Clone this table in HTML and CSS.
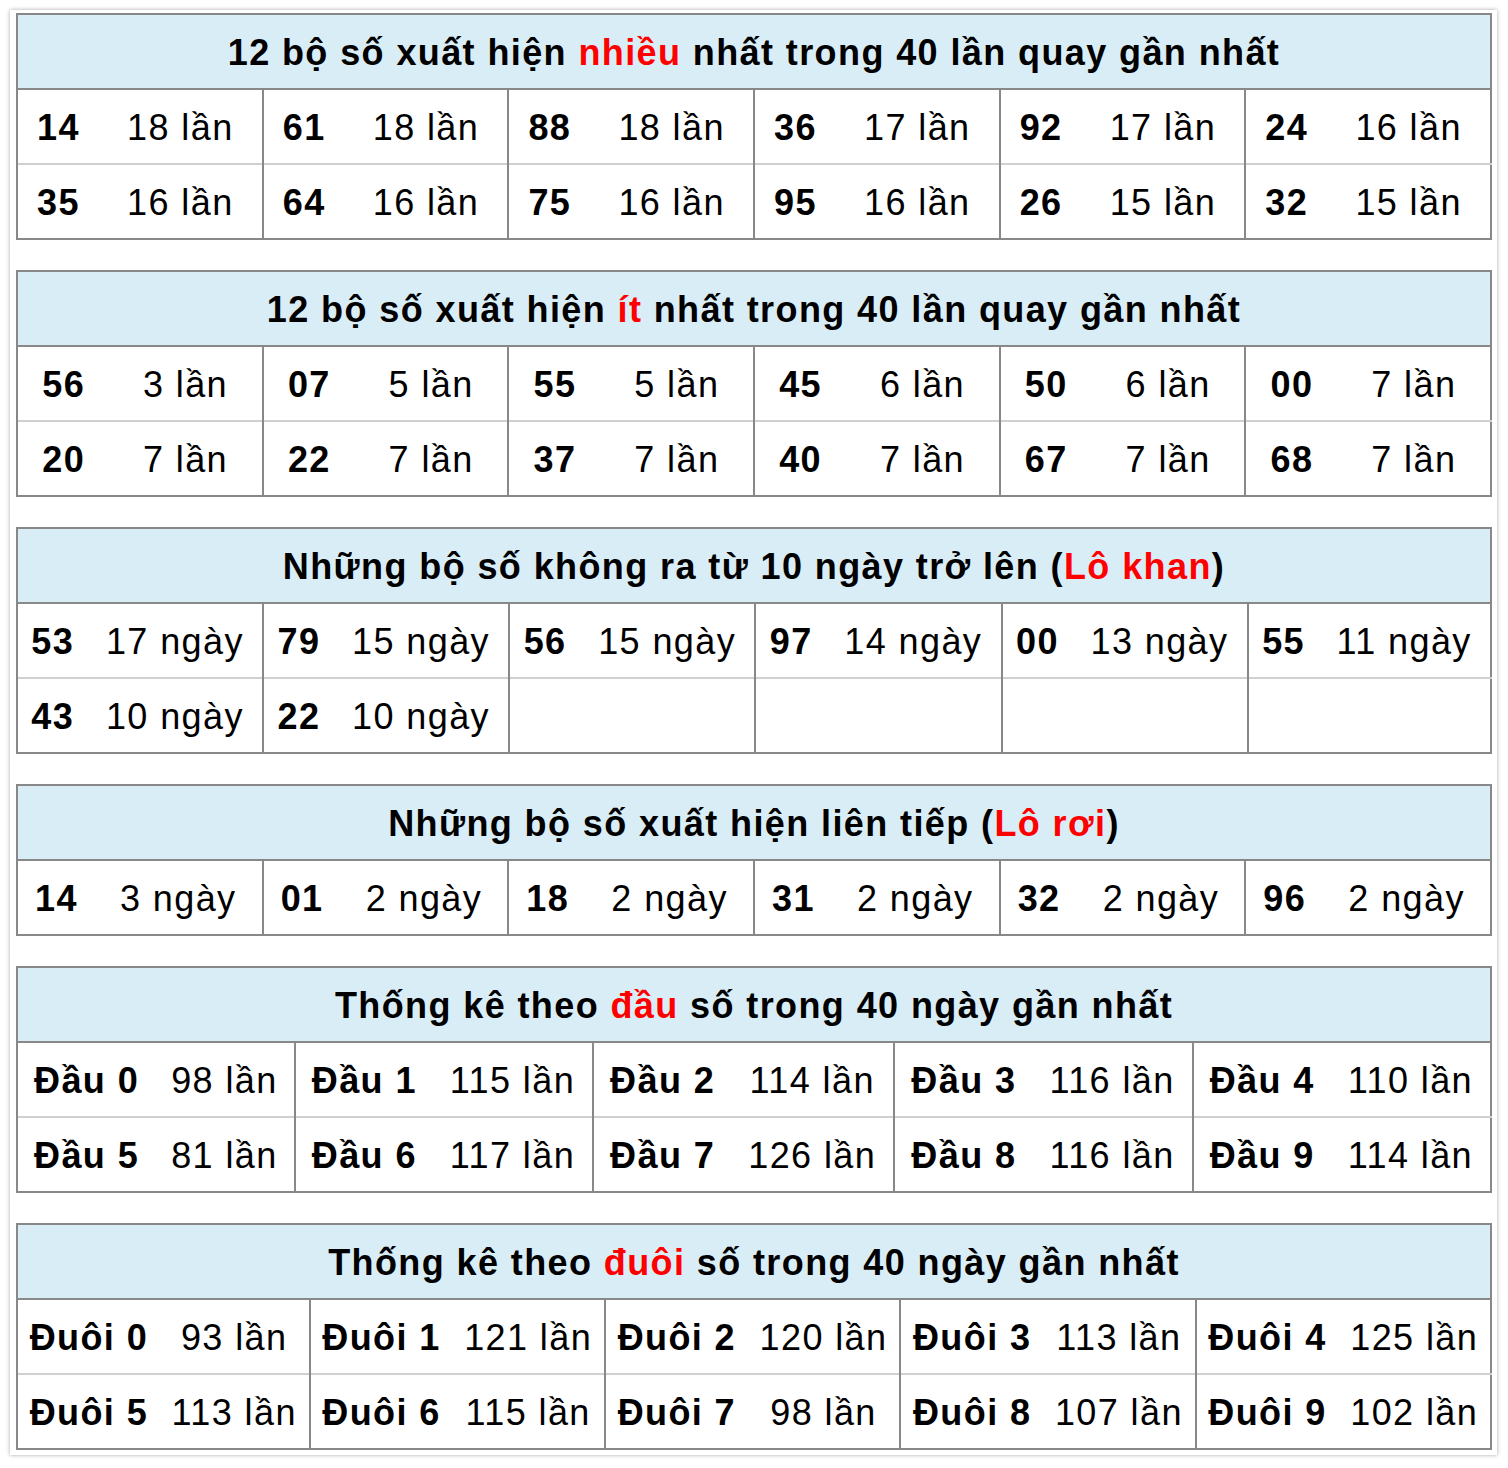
FILE: index.html
```html
<!DOCTYPE html>
<html lang="vi">
<head>
<meta charset="utf-8">
<title>Thống kê lô tô</title>
<link rel="stylesheet" href="styles.css">
</head>
<body>
<div class="wrap">

<table class="stat">
<tr><th colspan="12">12 bộ số xuất hiện <span class="hl">nhiều</span> nhất trong 40 lần quay gần nhất</th></tr>
<tr>
<td class="g n">14</td><td>18 lần</td>
<td class="g n">61</td><td>18 lần</td>
<td class="g n">88</td><td>18 lần</td>
<td class="g n">36</td><td>17 lần</td>
<td class="g n">92</td><td>17 lần</td>
<td class="g n">24</td><td>16 lần</td>
</tr>
<tr>
<td class="g n">35</td><td>16 lần</td>
<td class="g n">64</td><td>16 lần</td>
<td class="g n">75</td><td>16 lần</td>
<td class="g n">95</td><td>16 lần</td>
<td class="g n">26</td><td>15 lần</td>
<td class="g n">32</td><td>15 lần</td>
</tr>
</table>

<table class="stat">
<tr><th colspan="12">12 bộ số xuất hiện <span class="hl">ít</span> nhất trong 40 lần quay gần nhất</th></tr>
<tr>
<td class="g n">56</td><td>3 lần</td>
<td class="g n">07</td><td>5 lần</td>
<td class="g n">55</td><td>5 lần</td>
<td class="g n">45</td><td>6 lần</td>
<td class="g n">50</td><td>6 lần</td>
<td class="g n">00</td><td>7 lần</td>
</tr>
<tr>
<td class="g n">20</td><td>7 lần</td>
<td class="g n">22</td><td>7 lần</td>
<td class="g n">37</td><td>7 lần</td>
<td class="g n">40</td><td>7 lần</td>
<td class="g n">67</td><td>7 lần</td>
<td class="g n">68</td><td>7 lần</td>
</tr>
</table>

<table class="stat">
<tr><th colspan="12">Những bộ số không ra từ 10 ngày trở lên (<span class="hl">Lô khan</span>)</th></tr>
<tr>
<td class="g n">53</td><td>17 ngày</td>
<td class="g n">79</td><td>15 ngày</td>
<td class="g n">56</td><td>15 ngày</td>
<td class="g n">97</td><td>14 ngày</td>
<td class="g n">00</td><td>13 ngày</td>
<td class="g n">55</td><td>11 ngày</td>
</tr>
<tr>
<td class="g n">43</td><td>10 ngày</td>
<td class="g n">22</td><td>10 ngày</td>
<td class="g n"></td><td></td>
<td class="g n"></td><td></td>
<td class="g n"></td><td></td>
<td class="g n"></td><td></td>
</tr>
</table>

<table class="stat">
<tr><th colspan="12">Những bộ số xuất hiện liên tiếp (<span class="hl">Lô rơi</span>)</th></tr>
<tr>
<td class="g n">14</td><td>3 ngày</td>
<td class="g n">01</td><td>2 ngày</td>
<td class="g n">18</td><td>2 ngày</td>
<td class="g n">31</td><td>2 ngày</td>
<td class="g n">32</td><td>2 ngày</td>
<td class="g n">96</td><td>2 ngày</td>
</tr>
</table>

<table class="stat">
<tr><th colspan="10">Thống kê theo <span class="hl">đầu</span> số trong 40 ngày gần nhất</th></tr>
<tr>
<td class="g n">Đầu 0</td><td>98 lần</td>
<td class="g n">Đầu 1</td><td>115 lần</td>
<td class="g n">Đầu 2</td><td>114 lần</td>
<td class="g n">Đầu 3</td><td>116 lần</td>
<td class="g n">Đầu 4</td><td>110 lần</td>
</tr>
<tr>
<td class="g n">Đầu 5</td><td>81 lần</td>
<td class="g n">Đầu 6</td><td>117 lần</td>
<td class="g n">Đầu 7</td><td>126 lần</td>
<td class="g n">Đầu 8</td><td>116 lần</td>
<td class="g n">Đầu 9</td><td>114 lần</td>
</tr>
</table>

<table class="stat">
<tr><th colspan="10">Thống kê theo <span class="hl">đuôi</span> số trong 40 ngày gần nhất</th></tr>
<tr>
<td class="g n">Đuôi 0</td><td>93 lần</td>
<td class="g n">Đuôi 1</td><td>121 lần</td>
<td class="g n">Đuôi 2</td><td>120 lần</td>
<td class="g n">Đuôi 3</td><td>113 lần</td>
<td class="g n">Đuôi 4</td><td>125 lần</td>
</tr>
<tr>
<td class="g n">Đuôi 5</td><td>113 lần</td>
<td class="g n">Đuôi 6</td><td>115 lần</td>
<td class="g n">Đuôi 7</td><td>98 lần</td>
<td class="g n">Đuôi 8</td><td>107 lần</td>
<td class="g n">Đuôi 9</td><td>102 lần</td>
</tr>
</table>

</div>
</body>
</html>
```

FILE: styles.css
```css
html, body {
  margin: 0;
  padding: 0;
  background: #ffffff;
}

body {
  font-family: "Liberation Sans", Arial, Helvetica, sans-serif;
  color: #000000;
}

.wrap {
  margin: 10px 11px 10px 10px;
  padding: 3px 5px 5px 6px;
  background: #ffffff;
  box-shadow: 0 0 4px rgba(0, 0, 0, 0.35);
}

.stat {
  width: 100%;
  border-collapse: collapse;
  border: 2px solid #888888;
  margin: 0 0 30px 0;
  font-size: 36px;
  line-height: 41px;
  letter-spacing: 1.4px;
}

.stat:last-child {
  margin-bottom: 0;
}

.stat th {
  background: #d9edf7;
  font-weight: bold;
  text-align: center;
  padding: 17px 10px 15px;
  border-bottom: 2px solid #888888;
}

.stat td {
  text-align: center;
  padding: 17px 10px 15px;
  border-top: 2px solid #d0d0d0;
  white-space: nowrap;
}

.stat td.g {
  border-left: 2px solid #888888;
}

.stat td.n {
  font-weight: bold;
}

.hl {
  color: #ff0000;
}
```
